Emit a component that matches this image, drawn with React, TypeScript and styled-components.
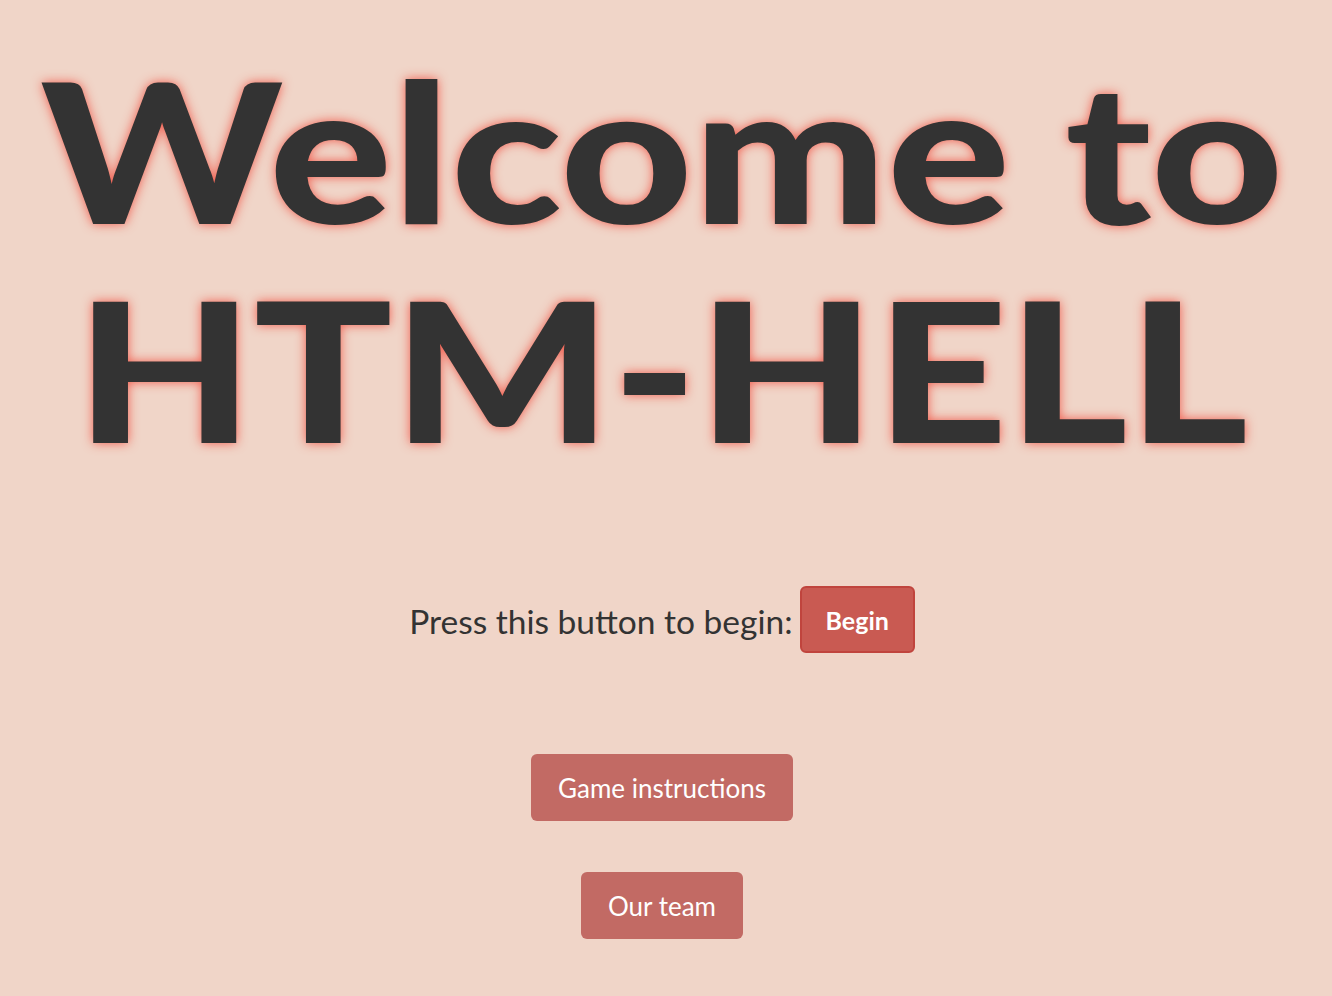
import React from "react";
import styled, { createGlobalStyle } from "styled-components";

const Global = createGlobalStyle`
  html, body { margin: 0; padding: 0; background: #f0d5c8; }
  body { font-family: "Lato", "Open Sans", sans-serif; color: #333; }
`;

const Page = styled.main`
  min-height: 996px;
  display: flex;
  flex-direction: column;
  align-items: center;
  padding: 40px 8px 0 0;
  box-sizing: border-box;
  overflow: hidden;
`;

const Title = styled.h1`
  margin: 0;
  font-family: "Lato", sans-serif;
  font-weight: 900;
  font-size: 195px;
  line-height: 219px;
  text-align: center;
  color: #333;
  text-shadow: 0 0 10px rgba(240, 84, 70, 0.95);
  transform: scaleX(1.18);
`;

const PromptRow = styled.div`
  margin-top: 108px;
  display: flex;
  align-items: center;
  gap: 7px;
`;

const Prompt = styled.span`
  font-size: 33.5px;
  color: #333;
  padding-top: 2px;
`;

const Button = styled.button<{ $primary?: boolean }>`
  height: 67px;
  box-sizing: border-box;
  padding: 0 ${(p) => (p.$primary ? 24 : 27)}px;
  border-radius: 6px;
  font-family: "Lato", sans-serif;
  font-size: ${(p) => (p.$primary ? 25 : 26)}px;
  font-weight: ${(p) => (p.$primary ? 700 : 400)};
  color: #fff;
  cursor: pointer;
  background: ${(p) => (p.$primary ? "#c95a52" : "#c26a64")};
  border: ${(p) => (p.$primary ? "2px solid #c0443d" : "none")};
`;

const NavButton = styled(Button)<{ $gap: number }>`
  margin-top: ${(p) => p.$gap}px;
`;

export default function App() {
  return (
    <>
      <Global />
      <Page>
        <Title>
          Welcome to
          <br />
          HTM-HELL
        </Title>
        <PromptRow>
          <Prompt>Press this button to begin:</Prompt>
          <Button $primary>Begin</Button>
        </PromptRow>
        <NavButton $gap={101}>Game instructions</NavButton>
        <NavButton $gap={51}>Our team</NavButton>
      </Page>
    </>
  );
}
